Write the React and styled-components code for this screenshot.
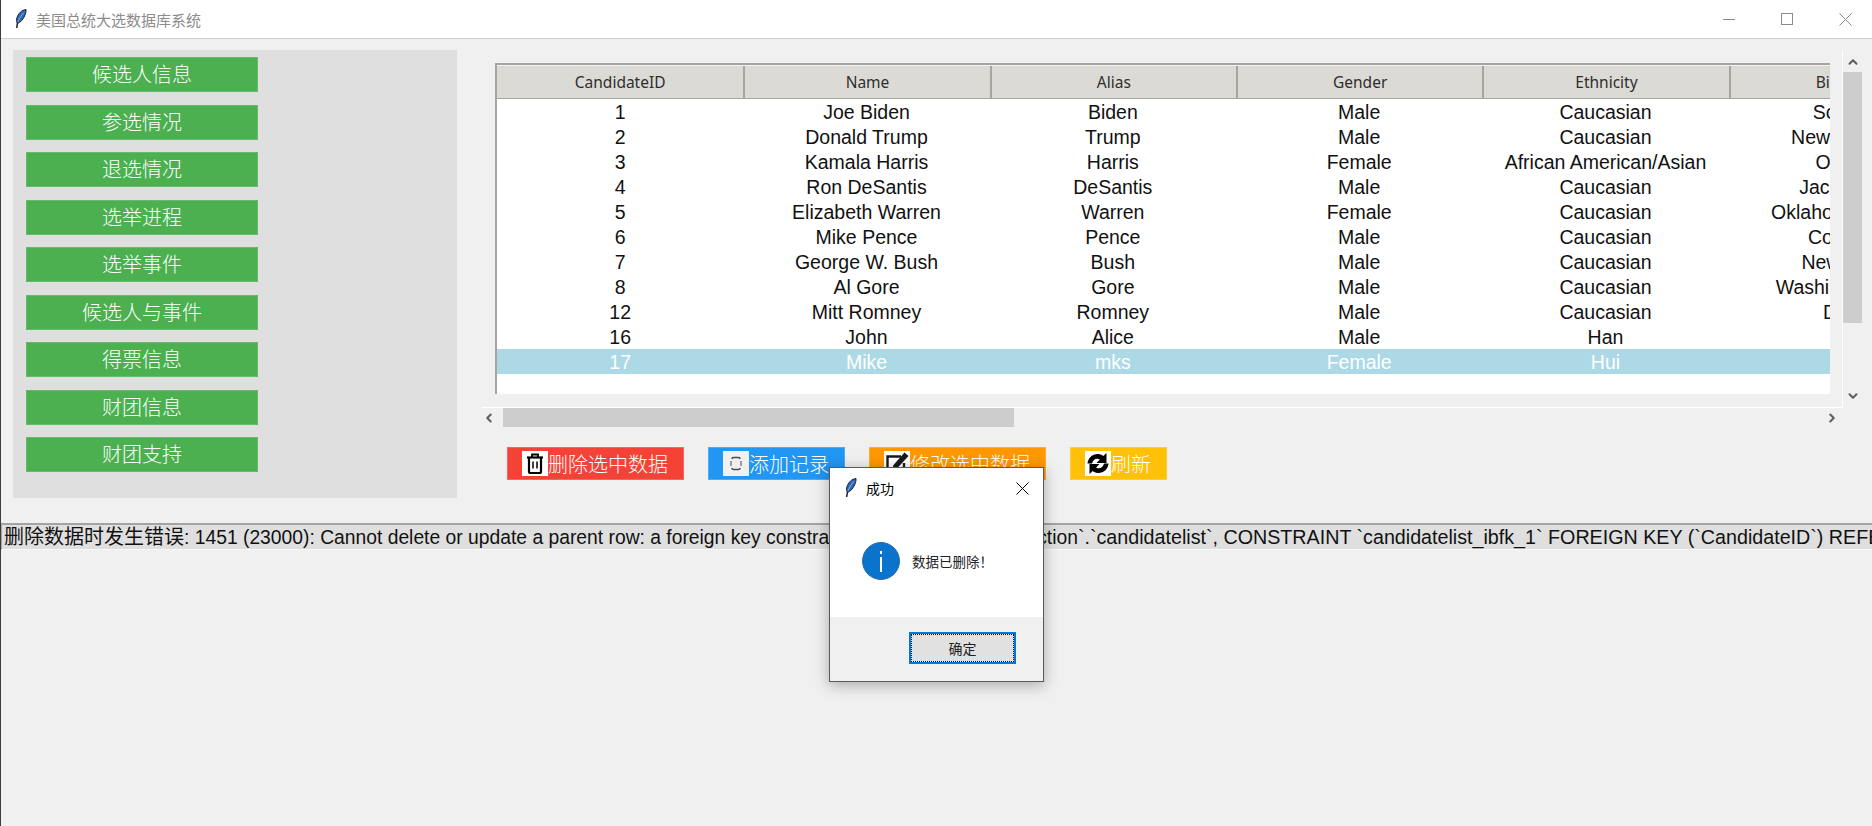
import React from 'react'
import styled, { createGlobalStyle } from 'styled-components'
import { ChevronUp, ChevronDown, ChevronLeft, ChevronRight } from 'lucide-react'

const UI_FONT = '"Liberation Sans", "Noto Sans CJK SC", sans-serif'

const MENU = ['候选人信息', '参选情况', '退选情况', '选举进程', '选举事件', '候选人与事件', '得票信息', '财团信息', '财团支持']

const COLUMNS = ['CandidateID', 'Name', 'Alias', 'Gender', 'Ethnicity', 'Birthplace']

const ROWS = [
  ['1', 'Joe Biden', 'Biden', 'Male', 'Caucasian', 'Scranton'],
  ['2', 'Donald Trump', 'Trump', 'Male', 'Caucasian', 'New York City'],
  ['3', 'Kamala Harris', 'Harris', 'Female', 'African American/Asian', 'Oakland'],
  ['4', 'Ron DeSantis', 'DeSantis', 'Male', 'Caucasian', 'Jacksonville'],
  ['5', 'Elizabeth Warren', 'Warren', 'Female', 'Caucasian', 'Oklahoma City OK'],
  ['6', 'Mike Pence', 'Pence', 'Male', 'Caucasian', 'Columbus'],
  ['7', 'George W. Bush', 'Bush', 'Male', 'Caucasian', 'New Haven'],
  ['8', 'Al Gore', 'Gore', 'Male', 'Caucasian', 'Washington, D.C.'],
  ['12', 'Mitt Romney', 'Romney', 'Male', 'Caucasian', 'Detroit'],
  ['16', 'John', 'Alice', 'Male', 'Han', ''],
  ['17', 'Mike', 'mks', 'Female', 'Hui', ''],
]

// the reference's hinted text runs narrow in lower case and wide in capitals, hence the two sizes
const ERROR_PREFIX = '删除数据时发生错误'
const ERROR_HEAD = ': 1451 (23000): Cannot delete or update a parent row: a foreign key constraint fails (`usa_voting_election'
const ERROR_TAIL = '`.`candidatelist`, CONSTRAINT `candidatelist_ibfk_1` FOREIGN KEY (`CandidateID`) REFERENCES `candidates` (`CandidateID`))'

function Feather() {
  return (
    <svg width="12" height="20" viewBox="0 0 12 20">
      <path d="M11 0.5C7 1 3 4 1.6 10c-.4 2 .2 3.4 1 4.2C6 13 8 10.5 9.600 7c1-2.400 1.600-4.500 1.400-6.500z" fill="#2c66b8" stroke="#1c2433" strokeWidth="1" />
      <path d="M9 3.500C6.500 6 4.500 9 3 13" fill="none" stroke="#9cc0ea" strokeWidth="0.8" />
      <path d="M2.600 13.500L1.600 19" fill="none" stroke="#1c2433" strokeWidth="1.500" />
    </svg>
  )
}

function TrashIcon() {
  return (
    <svg width="26" height="25" viewBox="0 0 26 25" fill="none" stroke="#000">
      <path d="M5 6.500h16" strokeWidth="2.200" />
      <path d="M10 6V3.500h6V6" strokeWidth="1.800" />
      <path d="M7 7v13.500q0 1.500 1.500 1.500h9q1.500 0 1.500-1.500V7" strokeWidth="2.200" />
      <path d="M11 10.500v7M15 10.500v7" strokeWidth="1.500" />
    </svg>
  )
}

function BlankGlyph() {
  return (
    <svg width="26" height="25" viewBox="0 0 26 25" fill="none" stroke="#4d4d4d" strokeWidth="1.500">
      <path d="M9 8q0-1.500 1.500-1.500h5Q17 6.500 17 8M9 17q0 1.500 1.500 1.500h5q1.500 0 1.500-1.500" />
      <path d="M8 10v5M18 10v5" strokeWidth="1" />
    </svg>
  )
}

function EditIcon() {
  return (
    <svg width="26" height="25" viewBox="0 0 26 25" fill="none">
      <path d="M17 5.500H3.500V22H20v-10" stroke="#1a1a1a" strokeWidth="2.400" />
      <path d="M20.500 1.500l4 3.500L13 17.500l-5 1.500 1.500-5z" fill="#1a1a1a" />
    </svg>
  )
}

function RefreshIcon() {
  return (
    <svg width="26" height="25" viewBox="0 0 26 25" fill="#000">
      <path d="M2.500 12.500C3 6.500 8 2.500 13.500 3c2 .2 3.600 1 4.800 2L21.500 2v10h-10l3.400-3.400C12 6.500 8 8 7 12.500z" />
      <path d="M23.500 12.500c-.5 6-5.500 10-11 9.500-2-.2-3.600-1-4.800-2L4.500 23V13h10l-3.400 3.400c2.900 2.100 6.900.6 7.900-3.900z" />
    </svg>
  )
}

const ACTIONS = [
  { label: '删除选中数据', color: '#f44336', iconBg: '#fff', Icon: TrashIcon },
  { label: '添加记录', color: '#2196f3', iconBg: '#f0f0f0', Icon: BlankGlyph },
  { label: '修改选中数据', color: '#ff9800', iconBg: '#fff', Icon: EditIcon },
  { label: '刷新', color: '#ffc107', iconBg: '#fff', Icon: RefreshIcon },
]

export default function App() {
  return (
    <Window>
      <GlobalStyle />
      <TitleBar>
        <TitleIcon>
          <Feather />
        </TitleIcon>
        <TitleText>美国总统大选数据库系统</TitleText>
        <WindowControls>
          <svg width="12" height="12" viewBox="0 0 12 12" stroke="#8a8a8a" shapeRendering="crispEdges">
            <path d="M0 6.500h12" />
          </svg>
          <svg width="12" height="12" viewBox="0 0 12 12" fill="none" stroke="#8a8a8a" shapeRendering="crispEdges">
            <rect x="0.500" y="0.500" width="11" height="11" />
          </svg>
          <svg width="13" height="13" viewBox="0 0 13 13" stroke="#8a8a8a">
            <path d="M0.500 0.500l12 12M12.500 0.500l-12 12" />
          </svg>
        </WindowControls>
      </TitleBar>

      <Main>
        <Sidebar>
          {MENU.map((item) => (
            <MenuButton key={item}>{item}</MenuButton>
          ))}
        </Sidebar>

        <TablePane>
          <TableGrid>
            <Canvas>
              <Tree>
                <HeaderRow>
                  {COLUMNS.map((col) => (
                    <HeaderCell key={col}>{col}</HeaderCell>
                  ))}
                </HeaderRow>
                {ROWS.map((row) => (
                  <Row key={row[0]} $selected={row[0] === '17'}>
                    {row.map((val, i) => (
                      <Cell key={i}>{val}</Cell>
                    ))}
                  </Row>
                ))}
              </Tree>
            </Canvas>
            <VScroll>
              <Arrow><ChevronUp size={14} strokeWidth={3.5} /></Arrow>
              <VThumb />
              <Arrow><ChevronDown size={14} strokeWidth={3.5} /></Arrow>
            </VScroll>
            <HScroll>
              <Arrow $horizontal><ChevronLeft size={14} strokeWidth={3.5} /></Arrow>
              <HThumb />
              <Arrow $horizontal><ChevronRight size={14} strokeWidth={3.5} /></Arrow>
            </HScroll>
          </TableGrid>

          <Actions>
            {ACTIONS.map(({ label, color, iconBg, Icon }) => (
              <ActionButton key={label} $color={color}>
                <IconBox $bg={iconBg}>
                  <Icon />
                </IconBox>
                {label}
              </ActionButton>
            ))}
          </Actions>
        </TablePane>
      </Main>

      <MessageLabel>
        <MessagePart $size={20}>{ERROR_PREFIX}</MessagePart>
        <MessagePart $size={19.3}>{ERROR_HEAD}</MessagePart>
        <MessagePart $size={19.7}>{ERROR_TAIL}</MessagePart>
      </MessageLabel>

      <Dialog>
        <DialogTitle>
          <Feather />
          <DialogCaption>成功</DialogCaption>
          <DialogClose width="13" height="13" viewBox="0 0 13 13" stroke="#000">
            <path d="M0.500 0.500l12 12M12.500 0.500l-12 12" />
          </DialogClose>
        </DialogTitle>
        <DialogBody>
          <svg width="38" height="38" viewBox="0 0 38 38">
            <circle cx="19" cy="19" r="18.500" fill="#0a74cc" stroke="#2a6aa8" strokeWidth="1" />
            <rect x="18" y="15" width="2" height="15" fill="#fff" />
            <rect x="18" y="9" width="2" height="3" fill="#fff" />
          </svg>
          <DialogText>数据已删除！</DialogText>
        </DialogBody>
        <DialogFooter>
          <OkButton>确定</OkButton>
        </DialogFooter>
      </Dialog>
    </Window>
  )
}

const GlobalStyle = createGlobalStyle`
  html, body {
    margin: 0;
    padding: 0;
    overflow: hidden;
  }
  body {
    font-family: ${UI_FONT};
  }
  * {
    box-sizing: border-box;
  }
`

const Window = styled.div`
  position: relative;
  width: 1872px;
  height: 826px;
  overflow: hidden;
  background: #f0f0f0;
  border-left: 1px solid #3c3c3c;
`

const TitleBar = styled.div`
  display: flex;
  align-items: center;
  height: 39px;
  padding-left: 14px;
  background: #fff;
  border-bottom: 1px solid #d2d2d2;
`

const TitleIcon = styled.div`
  display: flex;
  margin-right: 9px;
`

const TitleText = styled.span`
  font-size: 15px;
  color: #8c8c8c;
`

const WindowControls = styled.div`
  display: flex;
  align-items: center;
  gap: 46px;
  margin-left: auto;
  margin-right: 20px;
`

const Main = styled.div`
  display: flex;
  align-items: flex-start;
  padding: 11px 0 25px 12px;
`

const Sidebar = styled.div`
  display: flex;
  flex-direction: column;
  gap: 12.5px;
  width: 444px;
  height: 448px;
  padding: 7px 13px;
  background: #dfdfdf;
`

const MenuButton = styled.div`
  display: flex;
  align-items: center;
  justify-content: center;
  width: 232px;
  height: 35px;
  padding-bottom: 2px;
  background: #4caf50;
  box-shadow: inset 0 0 0 1px rgba(255, 255, 255, 0.15);
  color: #fff;
  font-size: 20px;
  font-weight: 300;
`

const TablePane = styled.div`
  display: flex;
  flex-direction: column;
  margin-left: 25px;
`

const TableGrid = styled.div`
  display: grid;
  grid-template-columns: 1361px 19px;
  grid-template-rows: 358px 19px;
`

const Canvas = styled.div`
  padding: 13px 12px 13px 13px;
  border-right: 1px solid #fff;
  border-bottom: 1px solid #fff;
`

const Tree = styled.div`
  width: 1335px;
  height: 331px;
  overflow: hidden;
  background: #fff;
  border-top: 2px solid #a8a59e;
  border-left: 2px solid #a8a59e;
`

const HeaderRow = styled.div`
  display: grid;
  grid-template-columns: repeat(6, 246.33px);
  height: 34px;
  padding-top: 1px;
  background: #f0f0f0;
`

const HeaderCell = styled.div`
  display: flex;
  align-items: center;
  justify-content: center;
  background: #dcdad5;
  border-left: 2px solid #a8a59e;
  border-bottom: 1px solid #a8a59e;
  font-family: "Noto Sans", sans-serif;
  font-size: 15.5px;
  color: #2e2e2e;

  &:first-child {
    border-left: none;
  }
`

const Row = styled.div`
  display: grid;
  grid-template-columns: repeat(6, 246.33px);
  height: 25px;
  background: ${(p) => (p.$selected ? '#add8e6' : 'transparent')};
  color: ${(p) => (p.$selected ? '#fff' : '#111')};
`

const Cell = styled.div`
  height: 25px;
  padding-top: 1px;
  font-size: 19.5px;
  line-height: 25px;
  text-align: center;
  white-space: nowrap;
`

const VScroll = styled.div`
  display: flex;
  flex-direction: column;
  justify-content: space-between;
  height: 358px;
  padding: 2px 0;
`

const VThumb = styled.div`
  height: 251px;
  margin-bottom: auto;
  background: #cdcdcd;
`

const HScroll = styled.div`
  display: flex;
  align-items: center;
  grid-column: 1 / span 2;
  height: 19px;
  padding-right: 23px;
`

const HThumb = styled.div`
  width: 511px;
  height: 19px;
  margin-left: 7px;
  margin-right: auto;
  background: #cdcdcd;
`

const Arrow = styled.div`
  display: flex;
  align-items: center;
  justify-content: center;
  flex: none;
  width: ${(p) => (p.$horizontal ? '14px' : '19px')};
  height: ${(p) => (p.$horizontal ? '19px' : '20px')};
  color: #5f5f5f;
`

const Actions = styled.div`
  display: flex;
  gap: 24px;
  margin-top: 20px;
  padding-left: 25px;
`

const ActionButton = styled.div`
  display: flex;
  align-items: center;
  height: 33px;
  padding: 0 16px 1px 15px;
  background: ${(p) => p.$color};
  box-shadow: inset 0 0 0 1px rgba(255, 255, 255, 0.2);
  color: #fff;
  font-size: 20px;
  font-weight: 300;
  white-space: nowrap;
`

const IconBox = styled.span`
  display: flex;
  width: 26px;
  height: 25px;
  margin-top: 1px;
  background: ${(p) => p.$bg};
`

const MessageLabel = styled.div`
  height: 27px;
  padding-left: 2px;
  overflow: hidden;
  background: #dfdfdf;
  border-top: 2px solid #a3a3a3;
  border-left: 1px solid #a3a3a3;
  border-bottom: 1px solid #f8f8f8;
  color: #111;
  line-height: 24px;
  white-space: nowrap;
`

const MessagePart = styled.span`
  font-size: ${(p) => p.$size}px;
`

const Dialog = styled.div`
  position: absolute;
  left: 828px;
  top: 467px;
  display: flex;
  flex-direction: column;
  width: 215px;
  height: 215px;
  background: #fff;
  border: 1px solid #595959;
  box-shadow: 0 3px 14px rgba(0, 0, 0, 0.3);
`

const DialogTitle = styled.div`
  display: flex;
  align-items: center;
  height: 40px;
  padding: 0 14px 0 15px;
`

const DialogCaption = styled.span`
  margin-left: 9px;
  font-size: 14px;
  color: #000;
`

const DialogClose = styled.svg`
  margin-left: auto;
`

const DialogBody = styled.div`
  display: flex;
  flex: 1;
  align-items: center;
  gap: 12px;
  padding: 0 0 3px 32px;
`

const DialogText = styled.span`
  font-size: 13.5px;
  color: #222;
`

const DialogFooter = styled.div`
  display: flex;
  justify-content: flex-end;
  height: 64px;
  padding: 15px 27px 0 0;
  background: #f0f0f0;
`

const OkButton = styled.div`
  display: flex;
  align-items: center;
  justify-content: center;
  width: 107px;
  height: 32px;
  background: #e1e1e1;
  border: 2px solid #0078d7;
  outline: 1px dotted #111;
  outline-offset: -3px;
  font-size: 14px;
  color: #222;
`
